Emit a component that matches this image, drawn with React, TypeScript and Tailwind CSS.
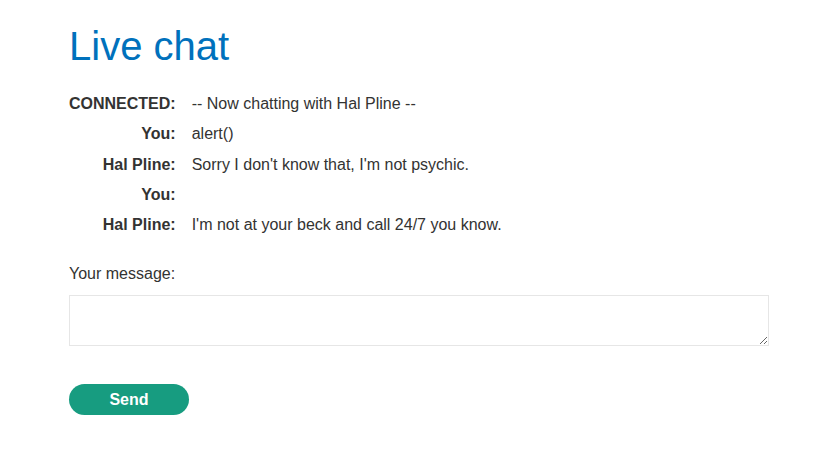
import React from 'react';

const messages: { who: string; text: string }[] = [
  { who: 'CONNECTED:', text: '-- Now chatting with Hal Pline --' },
  { who: 'You:', text: 'alert()' },
  { who: 'Hal Pline:', text: "Sorry I don't know that, I'm not psychic." },
  { who: 'You:', text: '' },
  { who: 'Hal Pline:', text: "I'm not at your beck and call 24/7 you know." },
];

const App: React.FC = () => {
  return (
    <div className="min-h-screen bg-white text-[#333332] text-[16px] font-['Liberation_Sans',Arial,sans-serif]">
      <div className="pl-[69px] w-[769px] pt-[22px]">
        <h1 className="text-[40px] leading-[48px] text-[#0071bc]">Live chat</h1>

        {/* Chat log */}
        <table className="mt-[19px] border-collapse">
          <tbody>
            {messages.map((m, i) => (
              <tr key={i} className="h-[30.3px]">
                <th className="text-right font-bold pr-4 align-middle whitespace-nowrap">{m.who}</th>
                <td className="align-middle">{m.text}</td>
              </tr>
            ))}
          </tbody>
        </table>

        {/* Message form */}
        <form className="mt-[24px]" onSubmit={(e) => e.preventDefault()}>
          <label className="block leading-[20px]">Your message:</label>
          <textarea className="block mt-[11px] w-[700px] h-[51px] border border-[#e6e6e6] bg-white outline-none px-2 py-1" />
          <button
            type="submit"
            className="mt-[38px] w-[120px] h-[31px] rounded-full bg-[#179c80] text-white font-bold"
          >
            Send
          </button>
        </form>
      </div>
    </div>
  );
};

export default App;
